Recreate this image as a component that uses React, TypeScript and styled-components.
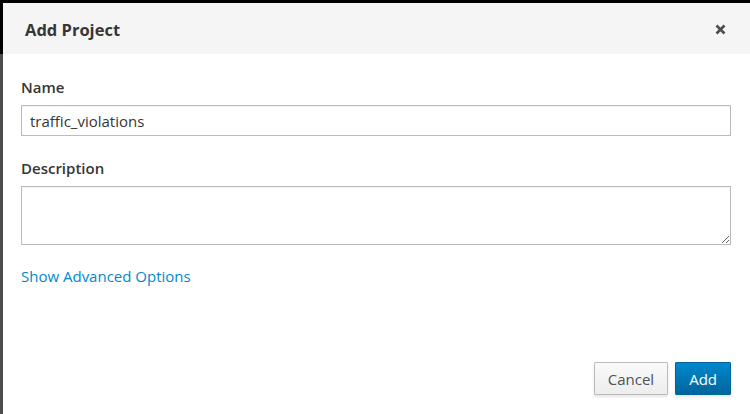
import React from "react";
import styled, { createGlobalStyle } from "styled-components";

const Global = createGlobalStyle`
  html, body { margin: 0; padding: 0; width: 750px; height: 414px; overflow: hidden; }
  body {
    font-family: "Open Sans", "Noto Sans", sans-serif;
    background: linear-gradient(to bottom, #000 0, #000 54px, #4d4d4d 54px, #4d4d4d 100%);
  }
  * { box-sizing: border-box; }
`;

const Backdrop = styled.div`
  padding: 3px 0 0 3px;
  width: 750px;
  height: 414px;
`;

const Modal = styled.div`
  background: #fff;
  width: 760px;
  height: 420px;
  display: flex;
  flex-direction: column;
`;

const Header = styled.div`
  background: #f5f5f5;
  height: 51px;
  display: flex;
  align-items: center;
  justify-content: space-between;
  padding: 0 24px 0 22px;
  width: 747px;
`;

const Title = styled.h4`
  margin: 0;
  font-size: 16.5px;
  font-weight: 700;
  color: #363636;
  padding-top: 1px;
`;

const Close = styled.button`
  border: 0;
  background: transparent;
  padding: 0;
  width: 12px;
  height: 12px;
  display: flex;
  align-items: center;
  justify-content: center;
  cursor: pointer;
  margin-top: 2px;
`;

const Body = styled.div`
  padding: 23px 19px 0 18px;
  width: 747px;
  display: flex;
  flex-direction: column;
`;

const Field = styled.div`
  display: flex;
  flex-direction: column;
  margin-bottom: 22px;
`;

const Label = styled.label`
  font-size: 15px;
  font-weight: 600;
  color: #363636;
  line-height: 20px;
  margin-bottom: 8px;
`;

const Input = styled.input`
  height: 31px;
  border: 1px solid #bbb;
  padding: 0 8px;
  font-family: inherit;
  font-size: 15px;
  color: #363636;
  outline: none;
  box-shadow: inset 0 1px 1px rgba(3, 3, 3, 0.06);
`;

const TextArea = styled.textarea`
  height: 59px;
  border: 1px solid #bbb;
  padding: 6px 8px;
  font-family: inherit;
  font-size: 15px;
  resize: vertical;
  outline: none;
  box-shadow: inset 0 1px 1px rgba(3, 3, 3, 0.06);
`;

const Link = styled.a`
  font-size: 15px;
  color: #0088ce;
  text-decoration: none;
  line-height: 20px;
  margin-top: -1px;
`;

const Footer = styled.div`
  margin-top: auto;
  width: 747px;
  display: flex;
  justify-content: flex-end;
  gap: 7px;
  padding: 0 19px 28px 0;
`;

const Button = styled.button<{ $primary?: boolean }>`
  height: 33px;
  padding: 0 13px;
  font-family: inherit;
  font-size: 15px;
  border-radius: 1px;
  border: 1px solid ${(p) => (p.$primary ? "#00659c" : "#bbb")};
  color: ${(p) => (p.$primary ? "#fff" : "#4d5258")};
  background: ${(p) =>
    p.$primary
      ? "linear-gradient(to bottom, #0088ce 0%, #00659c 100%)"
      : "linear-gradient(to bottom, #fafafa 0%, #ededed 100%)"};
  box-shadow: 0 2px 3px rgba(3, 3, 3, 0.1);
`;

export default function App() {
  return (
    <>
      <Global />
      <Backdrop>
        <Modal>
          <Header>
            <Title>Add Project</Title>
            <Close aria-label="Close">
              <svg width="11" height="11" viewBox="0 0 11 11">
                <path d="M1.5 1.5 L9.5 9.5 M9.5 1.5 L1.5 9.5" stroke="#4d4d4d" strokeWidth="2.6" strokeLinecap="butt" />
              </svg>
            </Close>
          </Header>
          <Body>
            <Field>
              <Label>Name</Label>
              <Input defaultValue="traffic_violations" />
            </Field>
            <Field>
              <Label>Description</Label>
              <TextArea />
            </Field>
            <Link href="#">Show Advanced Options</Link>
          </Body>
          <Footer>
            <Button>Cancel</Button>
            <Button $primary>Add</Button>
          </Footer>
        </Modal>
      </Backdrop>
    </>
  );
}
